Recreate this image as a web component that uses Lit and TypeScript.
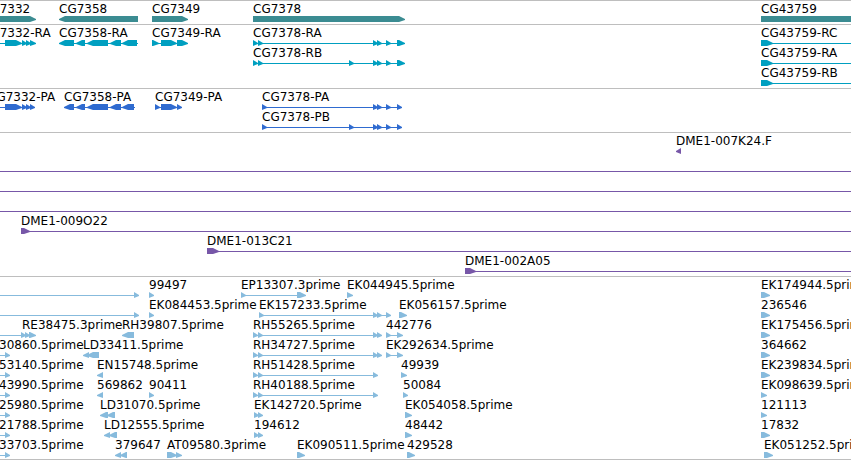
import { LitElement, html, svg, css } from "lit";
import { customElement, property } from "lit/decorators.js";

/** [start, end] of an exon; start > end means the reverse strand. */
type Exon = [number, number];

interface Feature {
  label?: string;
  /** Label start, when it differs from the first exon. */
  at?: number;
  exons: Exon[];
  /** Extent of the intron line; an end of null runs past the view. */
  line?: [number, number | null];
}

interface Track {
  name: string;
  kind: string;
  rows: Feature[][];
}

const f = (label: string, exons: Exon[], line?: [number, number | null], at?: number): Feature => ({
  label,
  exons,
  line,
  at,
});

const upstream = (label: string): Feature => f(label, [[5, 10]], [0, 10], -1);
const through: Feature = { exons: [], line: [0, null] };
const cdnaTail: Feature = { exons: [[134, 139]], line: [0, 139] };
const first: Exon[] = [[253, 258], [258, 263]];
const middle: Exon[] = [[373, 378], [377, 382]];

const tracks: Track[] = [
  {
    name: "Genes",
    kind: "gene",
    rows: [
      [
        f("CG7332", [[-18, 36]]),
        f("CG7358", [[138, 59]], undefined, 59),
        f("CG7349", [[152, 188]]),
        f("CG7378", [[253, 405]]),
        f("CG43759", [[761, 3000]]),
      ],
    ],
  },
  {
    name: "Transcripts",
    kind: "transcript",
    rows: [
      [
        f("CG7332-RA", [[5, 22], [22, 27], [26, 31], [30, 36]], [0, 36], -18),
        f("CG7358-RA", [[74, 59], [85, 76], [108, 87], [121, 110], [137, 122]], [59, 138], 59),
        f("CG7349-RA", [[152, 159], [161, 177], [177, 188]], [152, 188]),
        f("CG7378-RA", [...first, ...middle, [386, 391], [397, 405]], [253, 405]),
        f("CG43759-RC", [[761, 773]], [761, null]),
      ],
      [
        f("CG7378-RB", [...first, [349, 354], ...middle, [386, 391], [397, 405]], [253, 405]),
        f("CG43759-RA", [[761, 773]], [761, null]),
      ],
      [f("CG43759-RB", [[761, 773]], [761, null])],
    ],
  },
  {
    name: "Proteins",
    kind: "protein",
    rows: [
      [
        f("CG7332-PA", [[5, 22], [22, 27], [26, 31], [30, 35]], [0, 35], -12),
        f("CG7358-PA", [[74, 64], [85, 76], [108, 87], [121, 110], [134, 122]], [64, 135], 64),
        f("CG7349-PA", [[155, 160], [161, 177], [177, 182]], [155, 182]),
        f("CG7378-PA", [[262, 267], ...middle, [386, 391], [397, 402]], [262, 402]),
      ],
      [f("CG7378-PB", [[262, 267], [349, 354], ...middle, [386, 391], [397, 402]], [262, 402])],
    ],
  },
  {
    name: "BAC clones",
    kind: "clone",
    rows: [
      [f("DME1-007K24.F", [[681, 676]], undefined, 676)],
      [through],
      [through],
      [through],
      [f("DME1-009O22", [[21, 30]], [21, null])],
      [f("DME1-013C21", [[207, 219]], [207, null])],
      [f("DME1-002A05", [[465, 476]], [465, null])],
    ],
  },
  {
    name: "ESTs",
    kind: "est",
    rows: [
      [
        cdnaTail,
        f("99497", [[149, 154]]),
        f("EP13307.3prime", [[241, 246], [297, 306]], [241, 306]),
        f("EK044945.5prime", [[347, 353]]),
        f("EK174944.5prime", [[761, 770]]),
      ],
      [
        cdnaTail,
        f("EK084453.5prime", [[149, 154]]),
        f("EK157233.5prime", [[259, 264], ...middle, [386, 391]], [259, 391]),
        f("EK056157.5prime", [[399, 407]]),
        f("236546", [[761, 770]]),
      ],
      [
        f("RE38475.3prime", [[21, 26], [25, 30], [29, 36]], [0, 36], 22),
        f("RH39807.5prime", [[134, 122]], undefined, 122),
        f("RH55265.5prime", [...first, ...middle], [253, 382]),
        f("442776", [[386, 391], [397, 403]], [386, 403]),
        f("EK175456.5prime", [[761, 770]]),
      ],
      [
        upstream("30860.5prime"),
        f("LD33411.5prime", [[89, 83], [99, 87]], undefined, 83),
        f("RH34727.5prime", [...first, ...middle], [253, 382]),
        f("EK292634.5prime", [[386, 391], [397, 403]], [386, 403]),
        f("364662", [[761, 770]]),
      ],
      [
        upstream("53140.5prime"),
        f("EN15748.5prime", [[103, 97]], undefined, 97),
        f("RH51428.5prime", [...first, [373, 378]], [253, 378]),
        f("49939", [[401, 407]]),
        f("EK239834.5prime", [[761, 770]]),
      ],
      [
        upstream("43990.5prime"),
        f("569862", [[103, 97]], undefined, 97),
        f("90411", [[149, 154]]),
        f("RH40188.5prime", [...first, [373, 378]], [253, 378]),
        f("50084", [[403, 408]]),
        f("EK098639.5prime", [[761, 767]]),
      ],
      [
        upstream("25980.5prime"),
        f("LD31070.5prime", [[108, 100], [115, 107]], undefined, 100),
        f("EK142720.5prime", [[254, 259], [258, 263]]),
        f("EK054058.5prime", [[405, 412]]),
        f("121113", [[761, 767]]),
      ],
      [
        upstream("21788.5prime"),
        f("LD12555.5prime", [[110, 104], [117, 109]], undefined, 104),
        f("194612", [[254, 259], [258, 263]]),
        f("48442", [[405, 412]]),
        f("17832", [[761, 770]]),
      ],
      [
        upstream("33703.5prime"),
        f("379647", [[121, 115], [127, 120]], undefined, 115),
        f("AT09580.3prime", [[167, 177], [176, 182]]),
        f("EK090511.5prime", [[297, 305]]),
        f("429528", [[407, 415]]),
        f("EK051252.5prime", [[764, 773]]),
      ],
    ],
  },
];

/** A six-pixel-high bar that ends in an arrow head. */
function exonPath([start, end]: Exon): string {
  const dir = end > start ? 1 : -1;
  const neck = end - dir * Math.min(6, Math.abs(end - start));
  return `M${start} 0H${neck}L${end} 3V4L${neck} 6H${start}Z`;
}

@customElement("feature-track")
export class FeatureTrack extends LitElement {
  @property({ attribute: false }) track!: Track;

  static styles = css`
    :host {
      display: block;
      border-top: 1px solid #bebebe;
      padding: 1px 0 2px;
    }
    :host(:last-of-type) {
      border-bottom: 1px solid #bebebe;
      padding-bottom: 1px;
    }
    .row {
      position: relative;
      height: 20px;
      overflow: hidden;
      display: flex;
      align-items: flex-end;
    }
    .label {
      position: absolute;
      top: 0;
      line-height: 14px;
      white-space: nowrap;
    }
    .glyphs {
      display: block;
      flex: 1;
      min-width: 0;
      height: 6px;
      margin-top: 14px;
    }
    .gene { fill: #3b8c92; }
    .transcript { fill: #009fc0; }
    .protein { fill: #2f6bd0; }
    .clone { fill: #7757a8; }
    .est { fill: #87bbdd; }
  `;

  private glyph(feature: Feature) {
    const { line, exons } = feature;
    return svg`
      ${line
        ? svg`<rect x=${line[0]} y="3" height="1" width=${line[1] === null ? "100%" : line[1] - line[0]}></rect>`
        : null}
      ${exons.map((exon) => svg`<path d=${exonPath(exon)}></path>`)}
    `;
  }

  render() {
    const { rows, kind } = this.track;
    return rows.map(
      (row) => html`
        <div class="row">
          <svg class="glyphs ${kind}" aria-hidden="true">${row.map((item) => this.glyph(item))}</svg>
          ${row.map((item) =>
            item.label
              ? html`<span class="label" style="left:${item.at ?? item.exons[0][0]}px">${item.label}</span>`
              : null
          )}
        </div>
      `
    );
  }
}

@customElement("app-root")
export class AppRoot extends LitElement {
  static styles = css`
    :host {
      display: block;
      background: #fff;
      color: #000;
      font: 12px/16px "DejaVu Sans", sans-serif;
    }
  `;

  render() {
    return html`
      <main>
        ${tracks.map(
          (track) => html`<feature-track role="group" aria-label=${track.name} .track=${track}></feature-track>`
        )}
      </main>
    `;
  }
}
